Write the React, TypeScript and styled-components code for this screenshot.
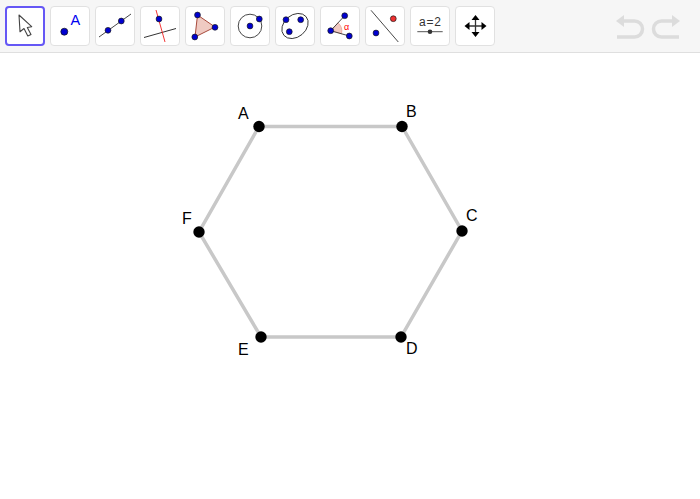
import React from "react";
import styled, { createGlobalStyle } from "styled-components";

const Global = createGlobalStyle`
  html, body { margin: 0; padding: 0; background: #fff; overflow: hidden; }
  body { font-family: "Liberation Sans", Arial, sans-serif; }
`;

const Page = styled.div`
  width: 700px;
  height: 499px;
  display: flex;
  flex-direction: column;
`;

const Toolbar = styled.div`
  height: 52px;
  flex: none;
  box-sizing: content-box;
  display: flex;
  align-items: flex-start;
  justify-content: space-between;
  background: #f6f6f6;
  border-bottom: 1px solid #dfdfdf;
`;

const ToolGroup = styled.div`
  display: flex;
  gap: 5px;
  padding: 6px 0 0 5px;
`;

const ToolButton = styled.button<{ $active?: boolean }>`
  width: 40px;
  height: 40px;
  padding: 0;
  box-sizing: border-box;
  display: flex;
  align-items: center;
  justify-content: center;
  background: #fff;
  border-radius: 4px;
  border: ${(p) => (p.$active ? "2px solid #6557f5" : "1px solid #e1e1e1")};
`;

const Glyph = styled.svg`
  width: 40px;
  height: 40px;
  flex: none;
`;

const HistoryGroup = styled.div`
  display: flex;
  gap: 4px;
  padding: 14px 20px 0 0;
`;

const HistoryIcon = styled.svg`
  width: 30px;
  height: 26px;
  display: block;
`;

const Canvas = styled.main`
  flex: 1;
  background: #fff;
`;

const Diagram = styled.svg`
  display: block;
  width: 700px;
  height: 446px;
`;

const PointLabel = styled.text`
  font-family: "Liberation Sans", Arial, sans-serif;
  font-size: 16px;
  fill: #000;
`;

const IconLetter = styled.text`
  font-family: "Liberation Sans", Arial, sans-serif;
  font-size: 14.5px;
  fill: #0000f0;
`;

const SliderText = styled.text`
  font-family: "Liberation Sans", Arial, sans-serif;
  font-size: 12px;
  word-spacing: -2.5px;
  fill: #333;
`;

const AngleText = styled.text`
  font-family: "Liberation Sans", Arial, sans-serif;
  font-size: 9px;
  fill: #f00;
`;

const Dot = ({ x, y, r = 2.9, fill = "#0000d0" }: { x: number; y: number; r?: number; fill?: string }) => (
  <circle cx={x} cy={y} r={r} fill={fill} stroke="#1a1a1a" strokeWidth={0.7} />
);

const icons: React.ReactNode[] = [
  <path key="m" d="M14 9 L15 25.7 L19 22.5 L22.8 30 L26 28.5 L22.3 21.5 L26.7 20.7 Z" fill="#fff" stroke="#444" strokeWidth={1.1} strokeLinejoin="round" />,
  <g key="p">
    <circle cx={14.3} cy={25.7} r={3.5} fill="#0000d0" stroke="#111" strokeWidth={0.7} />
    <IconLetter x={20.5} y={19}>A</IconLetter>
  </g>,
  <g key="l">
    <line x1={4} y1={31} x2={36} y2={8} stroke="#333" strokeWidth={0.9} />
    <Dot x={13} y={24.3} />
    <Dot x={26.3} y={15} />
  </g>,
  <g key="perp">
    <line x1={4} y1={31.5} x2={36} y2={22.5} stroke="#333" strokeWidth={1} />
    <line x1={16} y1={4} x2={25} y2={36} stroke="#f02020" strokeWidth={0.9} />
    <Dot x={19} y={13} />
  </g>,
  <g key="poly">
    <polygon points="12.5,9 30,21 10,31" fill="#e9b8ae" fillOpacity={0.75} stroke="#a84a3c" strokeWidth={1} />
    <Dot x={12.5} y={9} />
    <Dot x={30} y={21.3} />
    <Dot x={9.8} y={31} />
  </g>,
  <g key="circ">
    <circle cx={20} cy={20} r={11.8} fill="none" stroke="#333" strokeWidth={0.9} />
    <Dot x={20} y={20} />
    <Dot x={29.3} y={13} />
  </g>,
  <g key="ell">
    <ellipse cx={20} cy={20} rx={14.5} ry={11} fill="none" stroke="#333" strokeWidth={0.9} transform="rotate(-40 20 20)" />
    <Dot x={11} y={13.7} />
    <Dot x={25.7} y={13.7} />
    <Dot x={14.3} y={25.7} />
  </g>,
  <g key="ang">
    <path d="M10.7 24.7 L18 16.8 A 11 11 0 0 1 21.5 27.8 Z" fill="#efc0b6" fillOpacity={0.85} stroke="#e08070" strokeWidth={0.5} />
    <line x1={10.7} y1={24.7} x2={24.7} y2={9.7} stroke="#333" strokeWidth={0.9} />
    <line x1={10.7} y1={24.7} x2={29.3} y2={30} stroke="#333" strokeWidth={0.9} />
    <Dot x={10.7} y={24.7} />
    <Dot x={24.7} y={9.7} />
    <Dot x={29.3} y={30} />
    <AngleText x={24} y={23.5}>α</AngleText>
  </g>,
  <g key="lp">
    <line x1={6} y1={4.3} x2={33.3} y2={36} stroke="#333" strokeWidth={0.9} />
    <Dot x={28.3} y={12.7} fill="#f03030" />
    <Dot x={11} y={27} />
  </g>,
  <g key="sl">
    <SliderText x={20} y={19.5} textAnchor="middle">a = 2</SliderText>
    <line x1={7.3} y1={25.7} x2={32.7} y2={25.7} stroke="#555" strokeWidth={1} />
    <circle cx={20} cy={25.7} r={2.3} fill="#333" />
  </g>,
  <g key="mv">
    <path d="M20.5 11 V29 M11.5 20 H29.5" stroke="#333" strokeWidth={1.3} fill="none" />
    <path d="M20.5 9 L24.5 14 H16.5 Z M20.5 31 L24.5 26 H16.5 Z M9.5 20 L14.5 16 V24 Z M31.5 20 L26.5 16 V24 Z" fill="#000" />
  </g>,
];

const pts = {
  A: [259, 73.5],
  B: [402, 73.5],
  C: [462, 178],
  D: [401, 284],
  E: [261, 284],
  F: [199, 179],
};

const labels: [string, number, number][] = [
  ["A", 238, 66],
  ["B", 406, 64],
  ["C", 466, 168],
  ["D", 406, 301],
  ["E", 238, 302],
  ["F", 182, 171],
];

const UndoShape = () => (
  <>
    <path d="M6 7 H18.5 A8 8 0 0 1 18.5 23 H1" fill="none" stroke="#dcdcdc" strokeWidth={3.5} />
    <path d="M0 7 L8 1 V13 Z" fill="#dcdcdc" />
  </>
);

export default function App() {
  const names = Object.keys(pts) as (keyof typeof pts)[];
  const outline = names.map((n) => pts[n].join(",")).join(" ");
  return (
    <Page>
      <Global />
      <Toolbar>
        <ToolGroup>
          {icons.map((icon, i) => (
            <ToolButton key={i} $active={i === 0}>
              <Glyph viewBox="0 0 40 40">{icon}</Glyph>
            </ToolButton>
          ))}
        </ToolGroup>
        <HistoryGroup>
          <HistoryIcon viewBox="0 0 30 26">
            <UndoShape />
          </HistoryIcon>
          <HistoryIcon viewBox="0 0 30 26">
            <g transform="translate(30 0) scale(-1 1)">
              <UndoShape />
            </g>
          </HistoryIcon>
        </HistoryGroup>
      </Toolbar>
      <Canvas>
        <Diagram viewBox="0 0 700 446">
          <polygon points={outline} fill="none" stroke="#c8c8c8" strokeWidth={3.5} />
          {names.map((n) => (
            <circle key={n} cx={pts[n][0]} cy={pts[n][1]} r={5.7} fill="#000" />
          ))}
          {labels.map(([t, x, y]) => (
            <PointLabel key={t} x={x} y={y}>
              {t}
            </PointLabel>
          ))}
        </Diagram>
      </Canvas>
    </Page>
  );
}
